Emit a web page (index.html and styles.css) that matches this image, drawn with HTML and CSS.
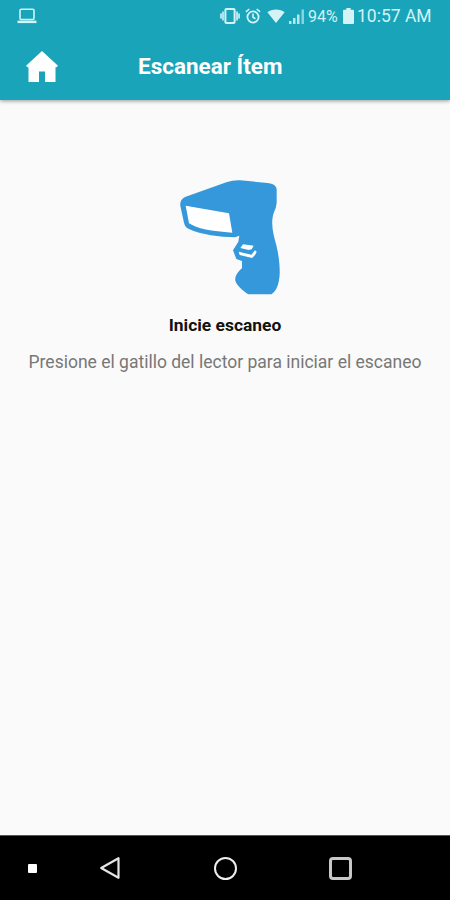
FILE: index.html
```html
<!DOCTYPE html>
<html lang="es">
<head>
  <meta charset="UTF-8">
  <meta name="viewport" content="width=device-width, initial-scale=1.0">
  <title>Escanear Ítem</title>
  <link rel="stylesheet" href="styles.css">
</head>
<body>
  <header class="cabecera">
    <div class="estado">
      <svg class="laptop" width="20" height="16" viewBox="0 0 20 16">
        <rect x="3" y="1.2" width="14" height="10.3" rx="1.2" fill="none" stroke="currentColor" stroke-width="1.6"/>
        <path d="M.5 12.600h19v2.500H.5z" fill="currentColor"/>
      </svg>
      <svg class="vibrar" width="20" height="16" viewBox="0 0 20 16">
        <rect x="5.4" y="1" width="9.2" height="14" rx="1" fill="none" stroke="currentColor" stroke-width="2"/>
        <path d="M3 3.500v9M1 5.500v5M17 3.500v9M19 5.500v5" fill="none" stroke="currentColor" stroke-width="1.600"/>
      </svg>
      <svg class="alarma" width="16" height="16" viewBox="0 0 16 16">
        <circle cx="8" cy="9" r="5.600" fill="none" stroke="currentColor" stroke-width="1.800"/>
        <path d="M.9 3.900L4.300 1M15.100 3.900L11.700 1M8 5.600v3.700l2.500 1.500" fill="none" stroke="currentColor" stroke-width="1.600"/>
      </svg>
      <svg class="wifi" width="18" height="14" viewBox="0 0 18 14">
        <path d="M9 14L.4 3.300C5 -.5 13 -.5 17.600 3.300z" fill="currentColor"/>
      </svg>
      <svg class="senal" width="16" height="15" viewBox="0 0 16 15">
        <path d="M0 12h2.500v3H0zM4 9h2.500v6H4zM8 5.500h2.500V15H8z" fill="currentColor" opacity=".85"/>
        <path d="M12.500 .5h2.500v14.500h-2.500z" fill="currentColor" opacity=".6"/>
      </svg>
      <span class="porcentaje">94%</span>
      <svg class="bateria" width="11" height="16" viewBox="0 0 11 16">
        <path d="M3.300 0h4.400v1.700H10q1 0 1 1V15q0 1-1 1H1q-1 0-1-1V2.700q0-1 1-1h2.300z" fill="currentColor"/>
      </svg>
      <span class="hora">10:57 AM</span>
    </div>
    <div class="barra">
      <svg class="inicio" width="32" height="31" viewBox="0 0 32 31">
        <path d="M16 0L32 14.800L30.500 16.300H29.500V31H19V20.500H13V31H2.500V16.300H1.500L0 14.800z" fill="currentColor"/>
      </svg>
      <h1>Escanear Ítem</h1>
    </div>
  </header>

  <main>
    <svg class="lector" width="130" height="135" viewBox="0 0 390 405">
      <path fill="#3498db" d="M48 92Q51 86 60 81L184 37Q204 30 226 31L308 39Q334 42 335 58V99Q334 113 326 129C316 162 325 192 334 226C343 262 347 306 342 330C339 350 331 366 319 373H250C233 361 216 348 211 332C209 318 220 304 231 295V273L214 267L204 241L220 215L223 197L210 202C163 200 111 195 70 176Q60 171 57 158L46 108Q45 98 48 92z"/>
      <path fill="#fff" d="M62 107L72 160Q107 183 202 188L192 130z"/>
      <path fill="#fff" d="M234 223L226 234L251 240L260 238L266 227L256 226zM221 245L224 255L261 264Q271 257 275 245L270 241L259 254z"/>
    </svg>
    <h2>Inicie escaneo</h2>
    <p>Presione el gatillo del lector para iniciar el escaneo</p>
  </main>

  <nav class="navegacion">
    <span class="punto"></span>
    <svg class="atras" width="22" height="24" viewBox="0 0 22 24">
      <path d="M19.500 2.200V21.800L2.200 12z" fill="none" stroke="currentColor" stroke-width="2.200" stroke-linejoin="round"/>
    </svg>
    <span class="circulo"></span>
    <span class="cuadro"></span>
  </nav>
</body>
</html>
```
FILE: styles.css
```css
* {
  box-sizing: border-box;
}
body {
  margin: 0;
  height: 900px;
  display: flex;
  flex-direction: column;
  font-family: Roboto, sans-serif;
  background-color: #fafafa;
  overflow: hidden;
}
svg {
  display: block;
  flex: none;
}
.cabecera {
  height: 100px;
  background-color: #19a4b9;
  color: white;
  box-shadow: 0 1px 4px rgba(0,0,0,0.4);
}
.estado {
  display: flex;
  align-items: center;
  height: 32px;
  padding-left: 17px;
  color: #d3f3f7;
  white-space: nowrap;
}
.vibrar {
  margin-left: 183px;
}
.alarma {
  margin-left: 5px;
}
.wifi {
  margin-left: 6px;
}
.senal {
  margin-left: 4px;
}
.porcentaje {
  width: 30px;
  margin-left: 3px;
  font-size: 16px;
}
.bateria {
  margin-left: 5px;
}
.hora {
  margin-left: 3px;
  font-size: 17.5px;
}
.barra {
  display: flex;
  align-items: center;
  height: 68px;
  padding-left: 26px;
}
h1 {
  margin: 0 0 0 80px;
  font-size: 22.5px;
  font-weight: bold;
}
main {
  flex: 1;
  display: flex;
  flex-direction: column;
  align-items: center;
  padding-top: 70px;
}
.lector {
  margin-left: 10px;
}
h2 {
  margin: 9px 0 0;
  font-size: 17.4px;
  line-height: 22px;
  font-weight: bold;
  color: #111;
}
p {
  margin: 15px 0 0;
  font-size: 17.5px;
  line-height: 22px;
  color: #777;
  white-space: nowrap;
}
.navegacion {
  display: flex;
  align-items: center;
  height: 65px;
  padding-left: 28px;
  background-color: black;
  border-top: 1px solid #555;
  color: #e4e4e4;
}
.punto {
  width: 9px;
  height: 9px;
  border-radius: 1px;
  background-color: white;
}
.atras {
  margin-left: 62px;
}
.circulo {
  width: 23px;
  height: 23px;
  margin-left: 93px;
  border: 2px solid #eee;
  border-radius: 50%;
}
.cuadro {
  width: 23px;
  height: 23px;
  margin-left: 92px;
  border: 3px solid #c8c8c8;
  border-radius: 4px;
}
```
